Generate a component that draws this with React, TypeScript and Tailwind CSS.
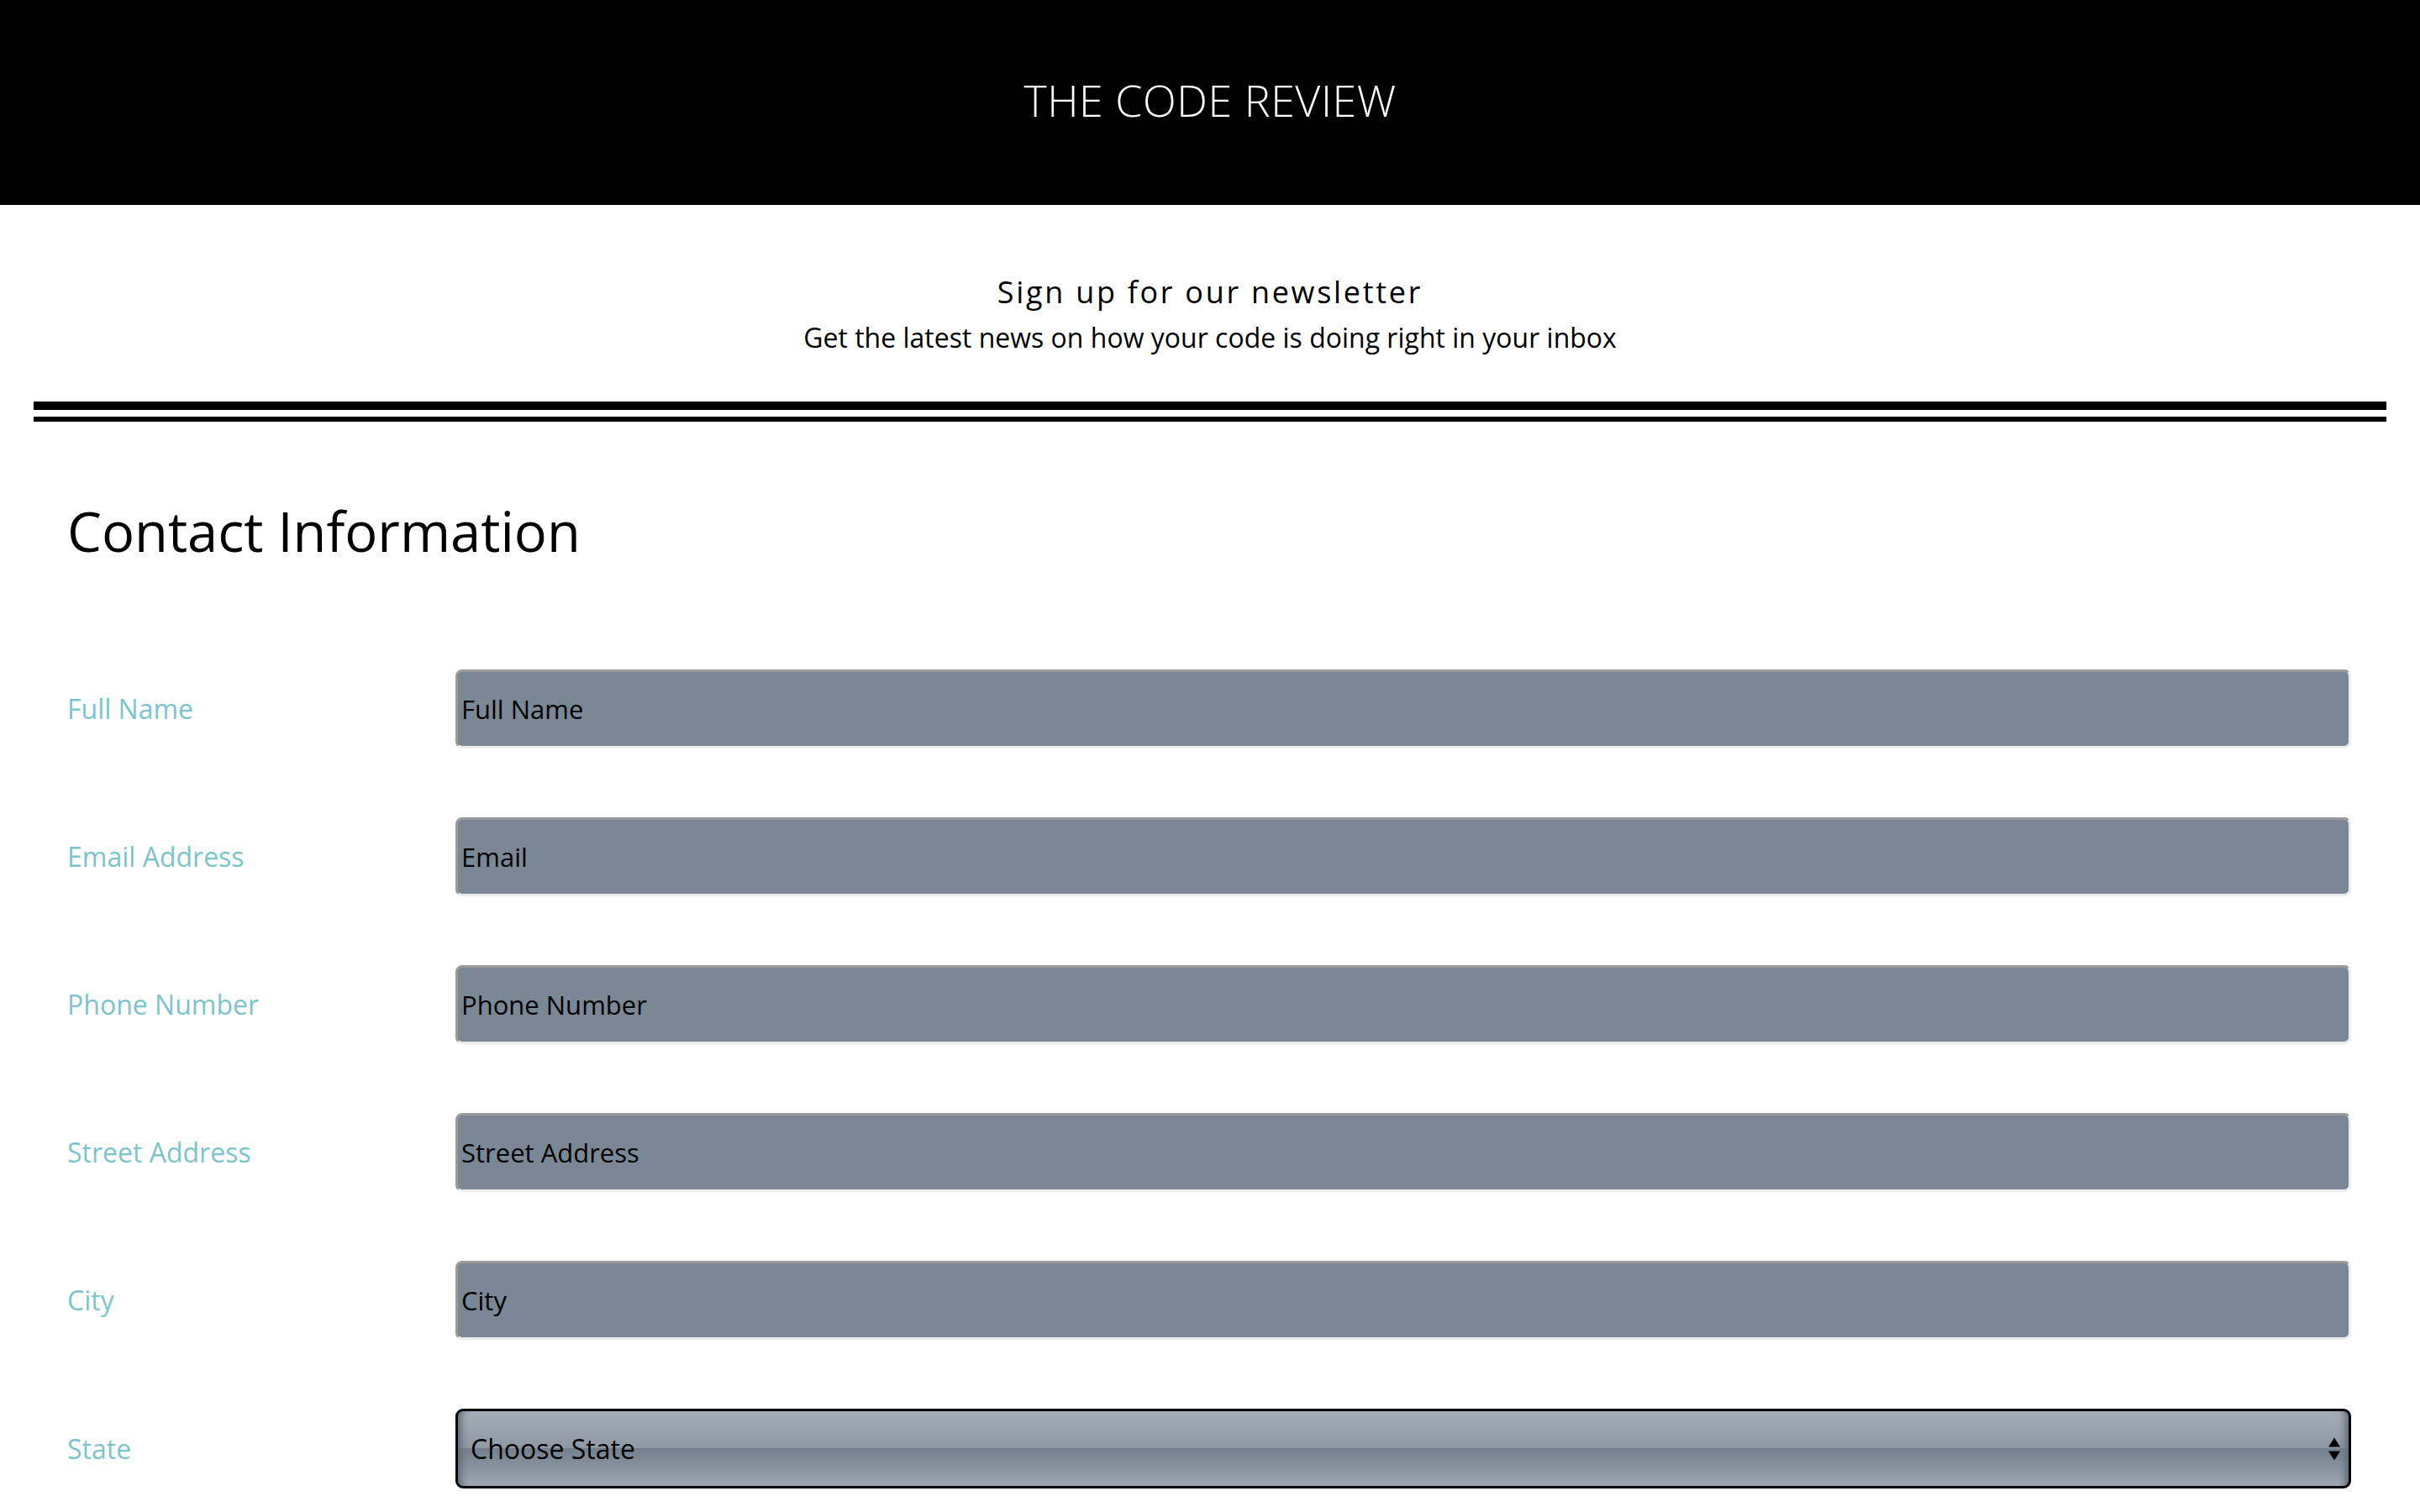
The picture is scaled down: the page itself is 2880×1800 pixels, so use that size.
import { useState } from "react";

const fields = [
  { label: "Full Name", placeholder: "Full Name", type: "text" },
  { label: "Email Address", placeholder: "Email", type: "email" },
  { label: "Phone Number", placeholder: "Phone Number", type: "tel" },
  { label: "Street Address", placeholder: "Street Address", type: "text" },
  { label: "City", placeholder: "City", type: "text" },
];

const states = ["Alabama", "Alaska", "Arizona", "California", "Colorado", "New York", "Texas"];

export default function App() {
  const [state, setState] = useState("");

  return (
    <div className="min-h-screen bg-white font-['Open_Sans','Noto_Sans',sans-serif] text-black">
      {/* Header */}
      <header className="flex h-[244px] items-center justify-center bg-black pb-[6px]">
        <h1 className="text-[52px] font-light tracking-[0.5px] text-white">THE CODE REVIEW</h1>
      </header>

      {/* Newsletter intro */}
      <section className="pt-[83px] text-center">
        <h2 className="text-[36px] leading-[42px] font-medium tracking-[2.7px]">Sign up for our newsletter</h2>
        <p className="mt-[13px] text-[32px] leading-[40px]">
          Get the latest news on how your code is doing right in your inbox
        </p>
      </section>

      {/* Double rule */}
      <div className="mx-10 mt-[56px] h-[24px] border-t-[10px] border-b-[6px] border-black" />

      {/* Form */}
      <form className="pr-[82px] pl-[80px] pt-[98px] pb-20">
        <h3 className="text-[65px] leading-none font-normal">Contact Information</h3>

        <div className="mt-[132px] flex flex-col gap-[82px]">
          {fields.map((f) => (
            <div key={f.label} className="flex items-center">
              <label className="w-[462px] shrink-0 text-[32px] text-[#7cc4cc]">{f.label}</label>
              <input
                type={f.type}
                placeholder={f.placeholder}
                className="h-[94px] flex-1 rounded-[8px] border-[3px] border-t-[#9a9a9a] border-l-[#9a9a9a] border-r-[#ececec] border-b-[#ececec] bg-[#7a8795] px-1 text-[31px] text-black outline-none placeholder:text-black"
              />
            </div>
          ))}

          <div className="flex items-center">
            <label className="w-[462px] shrink-0 text-[32px] text-[#7cc4cc]">State</label>
            <div className="relative flex-1">
              <select
                value={state}
                onChange={(e) => setState(e.target.value)}
                className="h-[95px] w-full appearance-none rounded-[9px] border-[3px] border-black bg-[linear-gradient(to_bottom,#a6adb6_0%,#8f99a4_49%,#74808d_50%,#87929e_75%,#a1a9b2_100%)] pl-[15px] text-[32px] text-black shadow-[inset_12px_0_8px_-8px_#5f6b78,inset_-12px_0_8px_-8px_#5f6b78] outline-none"
              >
                <option value="">Choose State</option>
                {states.map((s) => (
                  <option key={s} value={s}>
                    {s}
                  </option>
                ))}
              </select>
              <div className="pointer-events-none absolute top-1/2 right-[13px] flex -translate-y-1/2 flex-col items-center gap-[5px]">
                <span className="h-0 w-0 border-x-[7px] border-b-[11px] border-x-transparent border-b-black" />
                <span className="h-0 w-0 border-x-[7px] border-t-[11px] border-x-transparent border-t-black" />
              </div>
            </div>
          </div>
        </div>
      </form>
    </div>
  );
}
